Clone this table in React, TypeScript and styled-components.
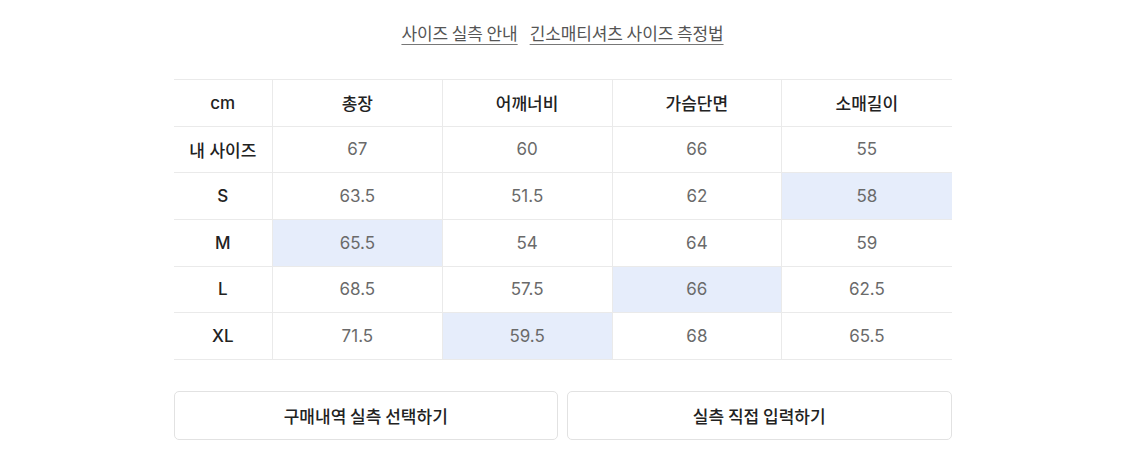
import React from 'react'
import styled, { createGlobalStyle } from 'styled-components'

const GlobalStyle = createGlobalStyle`
  body {
    margin: 0;
    background: #ffffff;
    font-family: "Inter", "Noto Sans CJK KR", sans-serif;
  }
`

const PageWrapper = styled.div`
  width: 100%;
  display: flex;
  flex-direction: column;
  align-items: center;
  padding-top: 18px;
`

const Links = styled.div`
  display: flex;
  gap: 12px;
  height: 28px;
  align-items: center;
`

const GuideLink = styled.a`
  font-family: "Noto Sans CJK KR", sans-serif;
  font-size: 17px;
  color: #555;
  text-decoration: underline;
  text-underline-offset: 4px;
  text-decoration-color: #777;
  letter-spacing: -0.1px;
  cursor: pointer;
`

const Con = styled.div`
  width: 778px;
`

const SizeTable = styled.table`
  width: 100%;
  margin-top: 33px;
  border-collapse: collapse;
  table-layout: fixed;
  border-top: 1px solid #eaeaea;
`

const Row = styled.tr`
  height: 46.67px;
  border-bottom: 1px solid #eaeaea;
`

const Cell = styled.td<{ $head?: boolean; $mark?: boolean }>`
  padding: 0;
  text-align: center;
  font-size: 17px;
  font-family: "Inter", "Noto Sans CJK KR", sans-serif;
  font-weight: ${p => (p.$head ? 500 : 400)};
  color: ${p => (p.$head ? '#222' : '#6a6a6a')};
  background: ${p => (p.$mark ? '#e6edfb' : 'transparent')};
  border-left: 1px solid #eaeaea;
  &:first-child {
    border-left: none;
  }
`

const Buttons = styled.div`
  display: grid;
  grid-template-columns: 1fr 1fr;
  gap: 9px;
  margin-top: 31px;
`

const Btn = styled.button`
  height: 49px;
  background: #fff;
  border: 1px solid #e2e2e2;
  border-radius: 5px;
  font-family: "Noto Sans CJK KR", sans-serif;
  font-size: 17px;
  font-weight: 500;
  color: #222;
  cursor: pointer;
`

export default function App() {
  const columns = ['총장', '어깨너비', '가슴단면', '소매길이']

  const rows = [
    { label: '내 사이즈', values: ['67', '60', '66', '55'], mark: -1 },
    { label: 'S', values: ['63.5', '51.5', '62', '58'], mark: 3 },
    { label: 'M', values: ['65.5', '54', '64', '59'], mark: 0 },
    { label: 'L', values: ['68.5', '57.5', '66', '62.5'], mark: 2 },
    { label: 'XL', values: ['71.5', '59.5', '68', '65.5'], mark: 1 },
  ]

  return (
    <PageWrapper>
      <GlobalStyle />
      <Links>
        <GuideLink>사이즈 실측 안내</GuideLink>
        <GuideLink>긴소매티셔츠 사이즈 측정법</GuideLink>
      </Links>
      <Con>
        <SizeTable>
          <colgroup>
            <col style={{ width: 99 }} />
            <col />
            <col />
            <col />
            <col />
          </colgroup>
          <tbody>
            <Row>
              <Cell $head>cm</Cell>
              {columns.map(c => (
                <Cell $head key={c}>{c}</Cell>
              ))}
            </Row>
            {rows.map(r => (
              <Row key={r.label}>
                <Cell $head>{r.label}</Cell>
                {r.values.map((v, i) => (
                  <Cell key={'v' + i} $mark={i === r.mark}>{v}</Cell>
                ))}
              </Row>
            ))}
          </tbody>
        </SizeTable>
        <Buttons>
          <Btn>구매내역 실측 선택하기</Btn>
          <Btn>실측 직접 입력하기</Btn>
        </Buttons>
      </Con>
    </PageWrapper>
  )
}
